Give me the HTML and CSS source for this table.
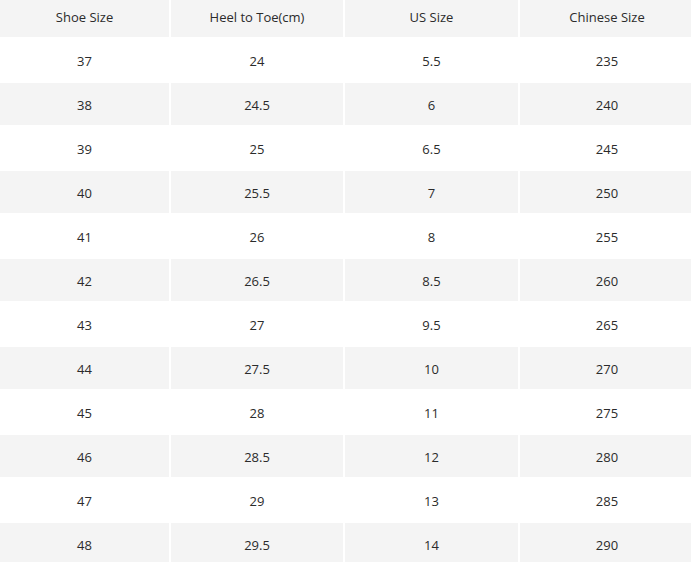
FILE: index.html
```html
<!DOCTYPE html>
<html>
<head>
<meta charset="utf-8">
<link rel="stylesheet" href="styles.css">
</head>
<body>
<table class="size-table">
  <colgroup>
    <col class="c1"><col class="c2"><col class="c3"><col class="c4">
  </colgroup>
  <thead>
    <tr><th>Shoe Size</th><th>Heel to Toe(cm)</th><th>US Size</th><th>Chinese Size</th></tr>
  </thead>
  <tbody>
    <tr><td>37</td><td>24</td><td>5.5</td><td>235</td></tr>
    <tr><td>38</td><td>24.5</td><td>6</td><td>240</td></tr>
    <tr><td>39</td><td>25</td><td>6.5</td><td>245</td></tr>
    <tr><td>40</td><td>25.5</td><td>7</td><td>250</td></tr>
    <tr><td>41</td><td>26</td><td>8</td><td>255</td></tr>
    <tr><td>42</td><td>26.5</td><td>8.5</td><td>260</td></tr>
    <tr><td>43</td><td>27</td><td>9.5</td><td>265</td></tr>
    <tr><td>44</td><td>27.5</td><td>10</td><td>270</td></tr>
    <tr><td>45</td><td>28</td><td>11</td><td>275</td></tr>
    <tr><td>46</td><td>28.5</td><td>12</td><td>280</td></tr>
    <tr><td>47</td><td>29</td><td>13</td><td>285</td></tr>
    <tr><td>48</td><td>29.5</td><td>14</td><td>290</td></tr>
  </tbody>
</table>
</body>
</html>
```
FILE: styles.css
```css
html, body {
  margin: 0;
  padding: 0;
  background: #fff;
  overflow: hidden;
}
.size-table {
  border-collapse: separate;
  border-spacing: 2px;
  margin: -2px 0 0 -2px;
  table-layout: fixed;
  width: 698px;
  font-family: "Open Sans", "Noto Sans", sans-serif;
  font-size: 13px;
  color: #2b2b2b;
}
.c1 { width: 169px; }
.c2 { width: 172px; }
.c3 { width: 173px; }
.c4 { width: 174px; }
.size-table th,
.size-table td {
  text-align: center;
  vertical-align: middle;
  font-weight: normal;
}
.size-table th {
  box-sizing: border-box;
  height: 37px;
  padding: 0 0 3px 0;
  background: #f4f4f4;
}
.size-table td {
  box-sizing: border-box;
  height: 42px;
  padding: 2px 0 0 0;
}
.size-table tbody tr:nth-child(even) td {
  background: #f4f4f4;
}
```
